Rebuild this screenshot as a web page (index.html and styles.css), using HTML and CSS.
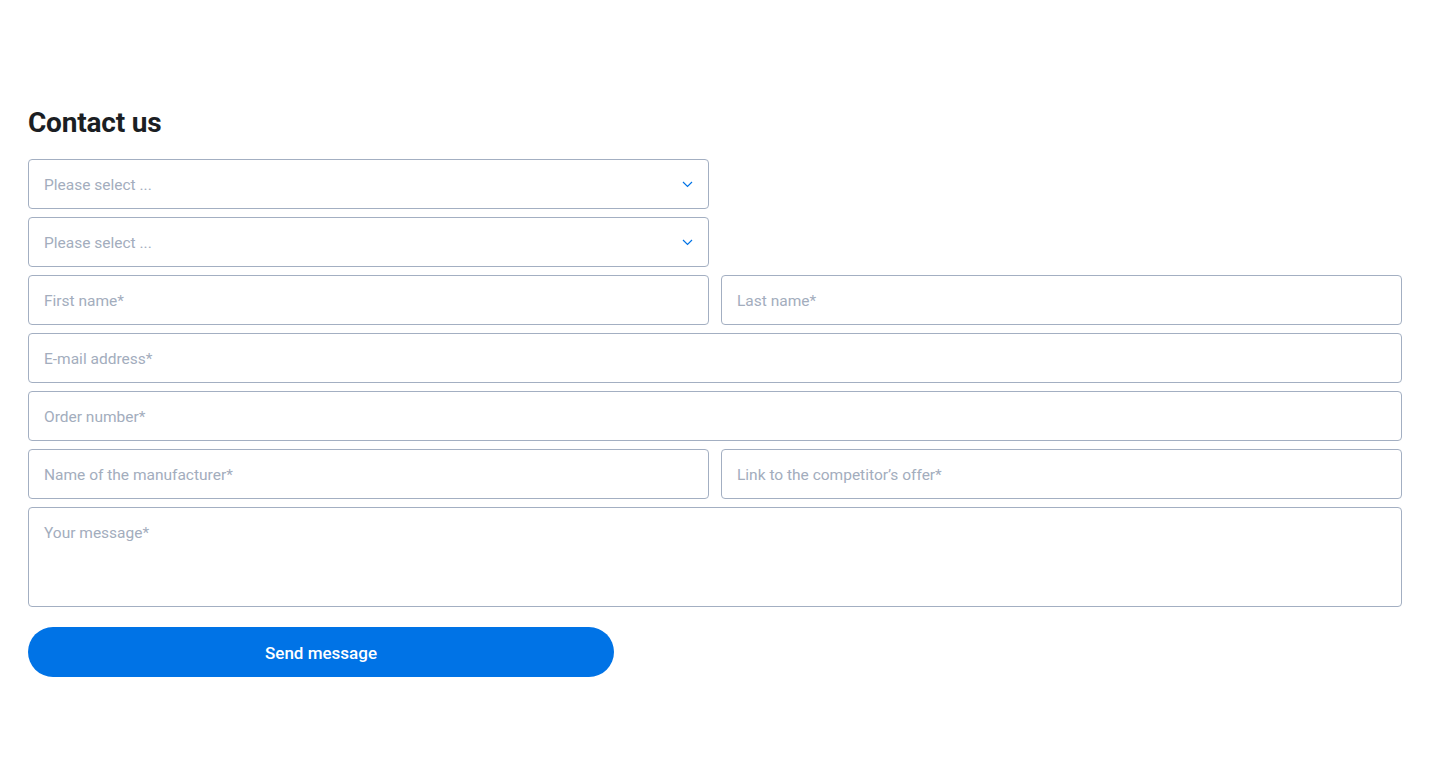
FILE: index.html
```
<!DOCTYPE html>
<html lang="en">
<head>
<meta charset="utf-8">
<title>Contact us</title>
<link rel="stylesheet" href="styles.css">
</head>
<body>
<main class="page">
  <h1 class="title">Contact us</h1>
  <form class="form">
    <div class="row half-row">
      <div class="field select">
        <span class="placeholder">Please select ...</span>
        <svg class="chevron" width="11" height="7" viewBox="0 0 11 7"><path d="M1 1l4.5 4.5L10 1" fill="none" stroke="#0073e6" stroke-width="1.2"/></svg>
      </div>
    </div>
    <div class="row half-row">
      <div class="field select">
        <span class="placeholder">Please select ...</span>
        <svg class="chevron" width="11" height="7" viewBox="0 0 11 7"><path d="M1 1l4.5 4.5L10 1" fill="none" stroke="#0073e6" stroke-width="1.2"/></svg>
      </div>
    </div>
    <div class="row two">
      <div class="field"><span class="placeholder">First name*</span></div>
      <div class="field"><span class="placeholder">Last name*</span></div>
    </div>
    <div class="row">
      <div class="field"><span class="placeholder">E-mail address*</span></div>
    </div>
    <div class="row">
      <div class="field"><span class="placeholder">Order number*</span></div>
    </div>
    <div class="row two">
      <div class="field"><span class="placeholder">Name of the manufacturer*</span></div>
      <div class="field"><span class="placeholder">Link to the competitor’s offer*</span></div>
    </div>
    <div class="row">
      <div class="field area"><span class="placeholder">Your message*</span></div>
    </div>
    <div class="actions">
      <button type="button" class="btn">Send message</button>
    </div>
  </form>
</main>
</body>
</html>
```
FILE: styles.css
```
* { box-sizing: border-box; }
html, body { margin: 0; padding: 0; background: #fff; }
body { font-family: Roboto, "Noto Sans", sans-serif; color: #1a1d22; }
.page { padding: 106px 28px 0 28px; }
.title { margin: 0 0 19px 0; font-size: 28px; line-height: 34px; font-weight: 700; letter-spacing: -0.2px; color: #1b1e23; }
.form { display: flex; flex-direction: column; gap: 8px; }
.row { display: grid; grid-template-columns: 1fr; }
.row.two, .row.half-row { grid-template-columns: 1fr 1fr; column-gap: 12px; }
.field { height: 50px; border: 1px solid #a3afc2; border-radius: 4px; display: flex; align-items: center; padding: 1px 15px 0 15px; position: relative; background: #fff; }
.field.select { justify-content: space-between; }
.field.area { height: 100px; align-items: flex-start; padding-top: 16px; }
.placeholder { font-size: 15.5px; color: #a3adbd; letter-spacing: 0; }
.chevron { display: block; margin-top: -1px; }
.actions { margin-top: 12px; }
.btn { width: 586px; height: 50px; border: 0; border-radius: 25px; background: #0073e6; color: #fff; font-family: Roboto, "Noto Sans", sans-serif; font-size: 17px; font-weight: 500; padding-top: 2px; cursor: pointer; }
```
